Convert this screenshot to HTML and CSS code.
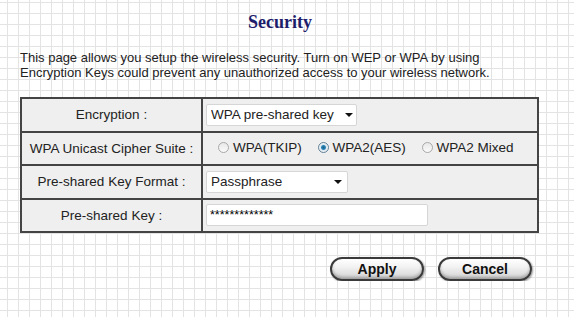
FILE: index.html
```html
<!DOCTYPE html>
<html lang="en">
<head>
    <meta charset="UTF-8">
    <title>Security</title>
    <link rel="stylesheet" href="styles.css">
</head>
<body>
    <div class="page">
        <h1 class="title">Security</h1>
        <p class="intro">This page allows you setup the wireless security. Turn on WEP or WPA by using<br>Encryption Keys could prevent any unauthorized access to your wireless network.</p>
        <table class="form-table">
            <tr>
                <td class="label">Encryption :</td>
                <td class="field">
                    <span class="select w-enc">
                        <select>
                            <option>WPA pre-shared key</option>
                        </select>
                    </span>
                </td>
            </tr>
            <tr>
                <td class="label">WPA Unicast Cipher Suite :</td>
                <td class="field radios">
                    <label><input type="radio" name="suite"> WPA(TKIP)</label>
                    <label><input type="radio" name="suite" checked> WPA2(AES)</label>
                    <label><input type="radio" name="suite"> WPA2 Mixed</label>
                </td>
            </tr>
            <tr>
                <td class="label">Pre-shared Key Format :</td>
                <td class="field">
                    <span class="select w-fmt">
                        <select>
                            <option>Passphrase</option>
                        </select>
                    </span>
                </td>
            </tr>
            <tr>
                <td class="label">Pre-shared Key :</td>
                <td class="field">
                    <input class="text-input" type="text" value="*************">
                </td>
            </tr>
        </table>
        <div class="buttons">
            <button class="btn">Apply</button>
            <button class="btn">Cancel</button>
        </div>
    </div>
</body>
</html>
```

FILE: styles.css
```css
body{
    margin: 0;
    background-color: #fff;
    background-image:
        linear-gradient(90deg, #e3e3e3 1px, transparent 1px),
        linear-gradient(0deg, #e3e3e3 1px, transparent 1px);
    background-size: 11px 11px;
    background-position: 7px 3px;
    font-family: "Liberation Sans", Arial, sans-serif;
    color: #222;
}
.page{
    width: 574px;
    padding-top: 12px;
}
.title{
    margin: 0;
    text-align: center;
    font-family: "Liberation Serif", "Times New Roman", serif;
    font-size: 18px;
    font-weight: bold;
    color: #1d1d6b;
    padding-right: 14px;
}
.intro{
    margin: 17px 0 0 20px;
    font-size: 13px;
    line-height: 15px;
}
.form-table{
    margin: 17px 0 0 20px;
    width: 519px;
    border-spacing: 0;
    border: 1px solid #444;
    background: #efefef;
}
.form-table td{
    border: 1px solid #444;
    height: 31.5px;
    padding: 0;
    font-size: 13.5px;
}
.form-table .label{
    width: 179px;
    text-align: center;
}
.form-table .field{
    padding-left: 3px;
}
.select{
    position: relative;
    display: inline-block;
    vertical-align: middle;
}
.select select{
    appearance: none;
    -webkit-appearance: none;
    height: 22px;
    border: 1px solid #d6d6d6;
    border-radius: 2px;
    background: #fff;
    font-family: "Liberation Sans", Arial, sans-serif;
    font-size: 13.5px;
    color: #222;
    padding: 0 0 0 4px;
    margin: 0;
}
.w-enc select{
    width: 151px;
}
.w-fmt select{
    width: 142px;
}
.select::after{ /* 下拉箭头 */
    content: "";
    position: absolute;
    right: 4px;
    top: 9px;
    border-left: 4px solid transparent;
    border-right: 4px solid transparent;
    border-top: 4px solid #111;
    pointer-events: none;
}
.w-fmt::after{
    right: 6px;
}
.radios label{
    display: inline-flex;
    align-items: center;
    gap: 4px;
    margin-left: 12px;
}
.radios label + label{
    margin-left: 12px;
}
.radios input{
    appearance: none;
    -webkit-appearance: none;
    margin: 0;
    width: 11px;
    height: 11px;
    border: 1px solid #a8a8a8;
    border-radius: 50%;
    background: linear-gradient(#e8e8e8, #fafafa);
}
.radios input:checked{
    border-color: #5f7f97;
    background: radial-gradient(circle, #1a5f8a 0, #2f86b8 2px, #dfe9f0 3px, #f5f5f5 5px);
}
.text-input{
    width: 222px;
    height: 22px;
    box-sizing: border-box;
    border: 1px solid #d6d6d6;
    border-radius: 2px;
    background: #fff;
    font-family: "Liberation Sans", Arial, sans-serif;
    font-size: 12.5px;
    padding: 0 3px;
    margin: 0;
    vertical-align: middle;
}
.buttons{
    display: flex;
    gap: 14px;
    margin: 24px 0 0 330px;
}
.btn{
    width: 94px;
    height: 24px;
    border: 2px solid #3a3a3a;
    border-radius: 12px;
    background: linear-gradient(#ffffff 0%, #f2f2f2 40%, #d2d2d2 100%);
    box-shadow: inset 0 -2px 3px rgba(0,0,0,0.25), 1px 1px 2px rgba(0,0,0,0.4);
    font-family: "Liberation Sans", Arial, sans-serif;
    font-size: 14px;
    font-weight: bold;
    color: #111;
    padding: 0;
    cursor: pointer;
}
```
